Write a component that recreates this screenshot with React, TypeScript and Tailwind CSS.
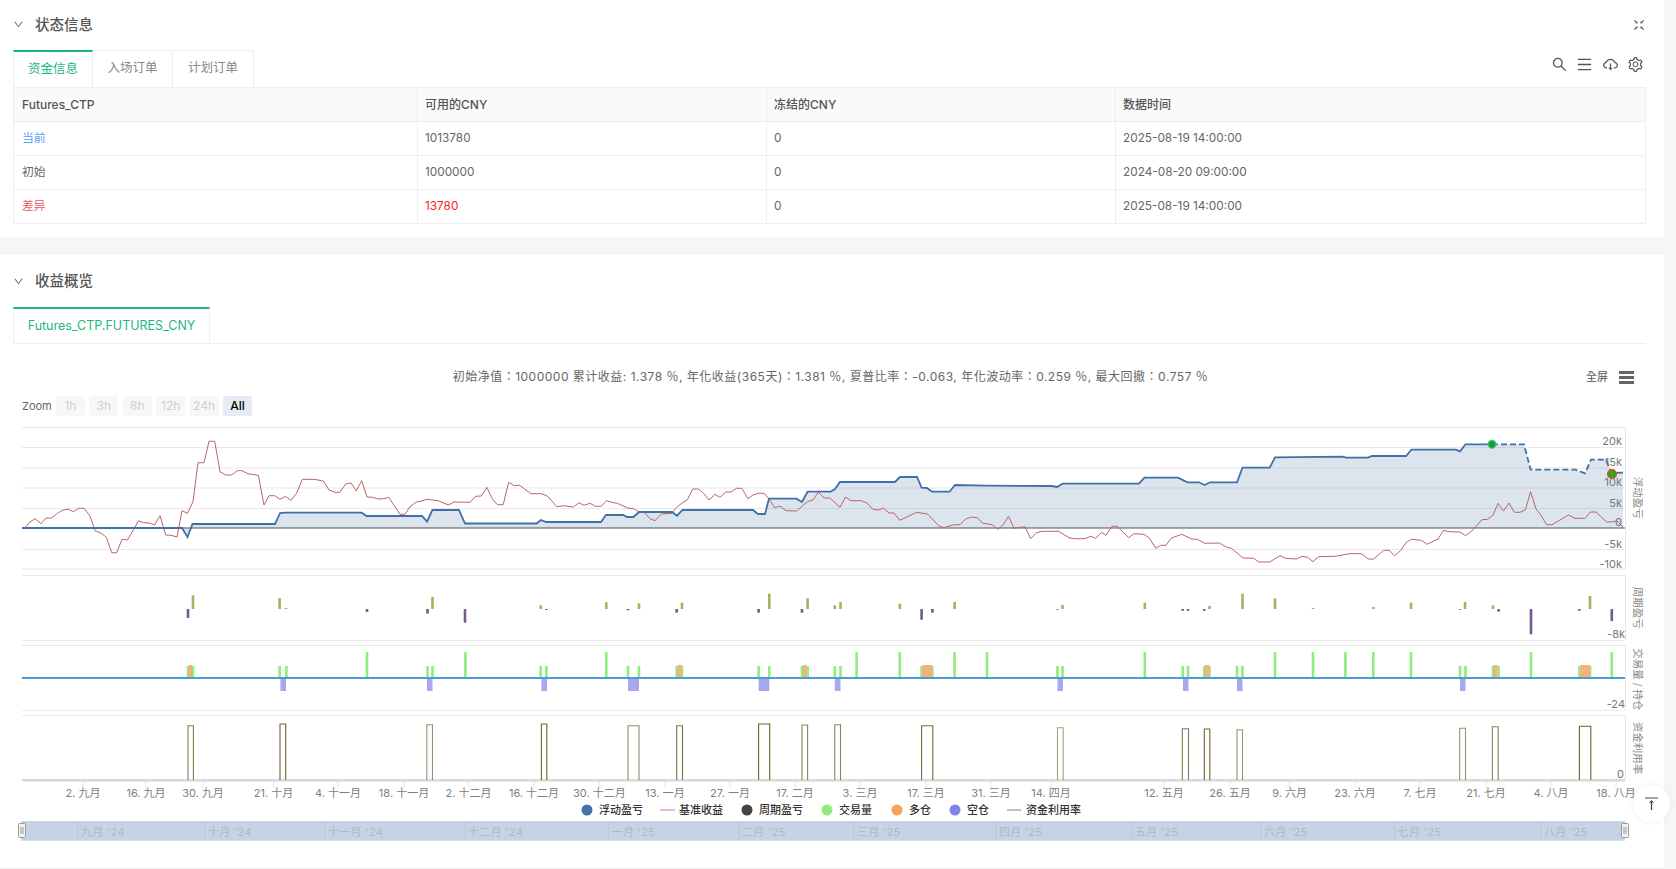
import React from "react";
import {
  AiOutlineCloudDownload,
  AiOutlineDown,
  AiOutlineFullscreenExit,
  AiOutlineMenu,
  AiOutlineSearch,
  AiOutlineSetting,
} from "react-icons/ai";

const FONT = "Inter, 'Noto Sans CJK SC', sans-serif";

const blueSolid =
  "22,528 182,528 187.5,537 192.5,524 275,524 280,513 285,512.7 361.6,512.7 366.6,516 422,516 427,521.7 432.4,510 459,510 465,523.5 536.5,523.5 541,520 546,522 601,522 606,515 623,515 627,517 633.5,517 639,512 672,512 677,515.7 682.5,510 753,510 758,514 765,514 769,498.7 796.5,498.7 802,502 807.6,491.7 830.6,491.7 835,489 840,482 895,482 900,477 917,477 921.6,487.7 927,488 932,491.7 949.6,491.7 955,485 985,485.7 1052,486 1057,487 1062.5,483.7 1139,483.7 1144.5,477.7 1178,477.7 1187.4,482.3 1199,482.3 1204.7,485 1210,482.3 1237,482.3 1242.5,467.7 1269.7,467.7 1275,457.3 1342.5,456.7 1346,457.7 1368,457.7 1372,456 1406,456 1411.5,449.7 1456,449.7 1460,451.3 1465.5,444.3 1492,444.3";
const blueDashed = "1492,444.3 1524,444.3 1530.6,469.7 1575.7,469.7 1585,473.3 1591,459.7 1606,459.7 1611.4,473";
const blueEnd = "1611.4,473 1623,472.7";

const red =
  "25,527.7 30,522 35,518.7 41,523.7 46,518 51.7,518 57.4,513.3 63,510 68,509.3 73.5,511.7 78.5,508.3 84,508.3 90,516 95,530.7 101.4,533.3 106.4,537.3 111.7,552.7 116.7,552.7 122,539.3 127.4,540 132.8,531 138.5,520.7 143.5,522.7 149.3,523 154.6,525 160,515.7 165.7,535 171,535.3 177,537 182,510.7 187.5,513.3 193,501.7 198,462.7 204,462.7 209,441.3 214.7,441.3 220,471.7 225.8,475 231.5,475 237.3,470.7 241.9,470.7 248,473.7 258.3,475.3 264,505 269,495.7 274.8,495.7 280,499.3 285.5,496.3 291,500.3 296.6,493.3 302.3,479.3 314,479.3 323.4,481 329,490 335,492.3 339.8,492.3 345.6,484 351,483 356.3,490.7 361.7,480.7 367,497 372.4,497.3 378,499 384,498.7 388.8,497.3 400,514.3 405,514.3 410,506.7 416.4,502 422,501 426.7,499.3 438,500.7 448.5,505 454,502 470,502.3 475.7,496.3 481.4,496 486.8,487.3 492.5,499.3 497.5,504.7 503.2,504.7 508.6,482.3 514.3,485.7 519.7,485.3 530.8,493.7 541.5,493.7 547.3,496 556.8,506.7 563.7,505.7 573.4,507 579,502.7 584,505.3 590,503.3 595.2,506.3 601,506.3 606.7,500.7 611.7,502.3 617.4,503.3 627.7,508 633.5,508.7 638.8,511.7 644,512 650,518.7 655,520.7 661,514 671.7,513.3 676.7,507.3 682.5,502.7 687.4,499.7 692.8,489 698.5,489 703.5,493.3 709,500 715,494.3 720,497.3 725.7,492 731,492 736.4,488.3 741.8,488.3 748,498.7 753,495 758.6,493.3 764,493.3 769.3,499.3 774.7,507.7 780,506 786,510.7 796.5,511 807.6,501.7 813,500 818.3,492.3 824,498 829.8,498 840,507.3 845.5,497 851,500.7 861.6,500.7 867.3,503.3 873,509.3 878.8,510 883.4,508 889,513 894,513 899.8,520.3 916.7,512.3 927.4,514 939,526 943.9,527.7 954,524.7 960,524.7 965.7,519 971.4,517 977,517.7 983,523.3 992.4,524.7 998,529.3 1003,525 1008.5,516.3 1014,528.3 1025,526.7 1030.7,538.7 1036.5,532.7 1042,531.3 1058.7,531.3 1069,537.7 1074.7,538.7 1085,538.7 1090.8,536.3 1095.8,538.3 1101.5,532.3 1106,535.3 1112,526.3 1117.3,526.3 1128.7,537.7 1133.8,533.7 1144,534.3 1149.6,538.3 1155.8,548.3 1160.6,545.3 1166,545.3 1171,538.3 1181.6,534.3 1191.8,539 1197.4,539.3 1204.7,543.3 1219.4,543 1226.7,547.3 1231.5,548.3 1243,558 1253.6,558.3 1259,562 1269.7,562 1280,555.7 1285.5,558.3 1296.5,559 1302,556.3 1307.6,557.3 1313,561.7 1318.6,556.7 1335,556.3 1349.8,553.7 1361.6,553.7 1368,559 1373.7,559 1383.6,550.3 1389,550.3 1394.6,555.7 1400.5,550.7 1406,542.7 1411.5,539.3 1421.4,540.3 1427,544.3 1438,539 1443.5,530.3 1449,531.7 1460,532 1465.5,535.7 1471.8,531 1482,519.7 1487.6,519.3 1493,515.3 1498,503.3 1503.4,511 1509,503 1514.4,512.3 1520,512.3 1525.4,509.7 1530.6,491.7 1536,509 1540.8,515 1546.7,524.7 1552,524.7 1568.4,515 1575,518.3 1585,518.3 1590.4,512 1596,512 1607,522.3 1617,521 1623.5,527.3";

// [x, y] where y is the far end of the bar from the zero line at 609
const profitBars: [number, number][] = [
  [188, 618], [193, 595.3], [279.6, 598], [286, 608], [367, 612], [427.5, 613.5], [432.5, 597], [465, 622.7],
  [540.7, 605.3], [546.4, 610], [606.3, 602.3], [628, 610.3], [639, 603.3], [676.7, 612.7], [682, 602.7],
  [758.6, 612.7], [769.3, 593.7], [802, 612.7], [807.6, 598.3], [834.8, 605.3], [840.5, 602], [899.8, 603.7],
  [921.6, 619.7], [932.4, 612.7], [954.6, 602], [1057.5, 609.7], [1062.5, 605], [1144.8, 602.7], [1182.7, 610.7],
  [1188, 610.7], [1204.3, 610.7], [1209.5, 606], [1242.5, 593.7], [1275, 598.3], [1313, 608], [1373.3, 607],
  [1411, 602.7], [1460, 609.7], [1465, 602], [1493, 605.3], [1498.6, 611.7], [1531, 634.3], [1579.4, 610.7],
  [1590, 596], [1611.8, 621],
];

const fullVolume = [367, 465.4, 606.3, 856.6, 899.8, 954.6, 987, 1144.8, 1275, 1313, 1345.4, 1373.3, 1411, 1531, 1611.8];
const halfVolume = [
  188, 193, 279.6, 286.4, 427.5, 432.5, 540.7, 546.4, 628, 639, 676.7, 682, 758.6, 769.3, 802, 807.6, 834.8, 840.5,
  921.6, 932.4, 1057.5, 1062.5, 1182.7, 1188, 1204.3, 1209.5, 1237, 1242.5, 1460, 1465.5, 1493, 1498.6, 1579.4, 1590,
];
const longBlocks: [number, number][] = [
  [188, 193], [676.7, 682.5], [802, 807.6], [921.6, 933], [1204, 1210], [1492.4, 1498.2], [1579.4, 1591],
];
const shortBlocks: [number, number][] = [
  [280.4, 286], [427, 432.5], [541.4, 547], [628, 639], [758.6, 769.3], [834.8, 840.5], [1057.5, 1063], [1183, 1188.5],
  [1237, 1242.5], [1460, 1465.5],
];

// [left, right, top, opacity]
const usage: [number, number, number, number][] = [
  [188, 193.4, 725.7, 0.85], [280, 285.7, 724, 1], [426.8, 432.5, 724.7, 0.7], [541.4, 546.8, 724, 1],
  [628, 639, 725.7, 0.75], [676.7, 682.5, 725.7, 0.9], [758.6, 769.7, 724, 1], [802, 807.6, 725, 0.8],
  [834.8, 840.5, 724.7, 0.8], [921.6, 932.8, 725.7, 0.95], [1057.5, 1063.2, 727.7, 0.6], [1182.3, 1188.5, 728.7, 0.85],
  [1204.3, 1209.8, 729, 1], [1237, 1242.5, 729.7, 0.7], [1459.7, 1465.5, 728.3, 0.7], [1492.4, 1498.2, 726.7, 0.8],
  [1579.4, 1590.8, 726.3, 1],
];

const xLabels: [number, string][] = [
  [83, "2. 九月"], [146, "16. 九月"], [203, "30. 九月"], [273.6, "21. 十月"], [338, "4. 十一月"], [404, "18. 十一月"],
  [468.6, "2. 十二月"], [534, "16. 十二月"], [599.4, "30. 十二月"], [665, "13. 一月"], [730, "27. 一月"], [795, "17. 二月"],
  [860, "3. 三月"], [926, "17. 三月"], [991, "31. 三月"], [1051, "14. 四月"], [1164, "12. 五月"], [1230, "26. 五月"],
  [1289.6, "9. 六月"], [1355, "23. 六月"], [1420, "7. 七月"], [1486, "21. 七月"], [1551, "4. 八月"], [1616, "18. 八月"],
];

const navMonths: [number, string][] = [
  [78, "九月 '24"], [205, "十月 '24"], [325, "十一月 '24"], [465, "十二月 '24"], [608.6, "一月 '25"], [739, "二月 '25"],
  [854, "三月 '25"], [996, "四月 '25"], [1132, "五月 '25"], [1261, "六月 '25"], [1394.6, "七月 '25"], [1541, "八月 '25"],
];

const yLabels: [number, string][] = [
  [445, "20k"], [466, "15k"], [486, "10k"], [507, "5k"], [526, "0"], [548, "-5k"], [568, "-10k"],
];

const grid = [427.5, 447.5, 468, 488, 508.5, 549.5, 569];
const paneTops = [575.5, 645.5, 715.5];

function ChartSvg() {
  return (
    <svg width="1676" height="440" viewBox="0 420 1676 440" className="block" style={{ fontFamily: FONT }}>
      {grid.map((y) => (
        <line key={y} x1="22" x2="1625" y1={y} y2={y} stroke="#e9e9e9" strokeWidth="1.2" />
      ))}
      {paneTops.map((y) => (
        <line key={y} x1="22" x2="1625" y1={y} y2={y} stroke="#ebebeb" strokeWidth="1.2" />
      ))}
      <line x1="22" x2="1625" y1="640.5" y2="640.5" stroke="#ebebeb" strokeWidth="1.2" />
      <line x1="22" x2="1625" y1="710.5" y2="710.5" stroke="#ebebeb" strokeWidth="1.2" />
      {[[427, 569], [575, 640], [645, 710], [715, 780]].map(([a, b]) => (
        <line key={a} x1="1625.5" x2="1625.5" y1={a} y2={b} stroke="#dfe5f2" />
      ))}

      <polygon points={`${blueSolid} ${blueDashed} ${blueEnd} 1623,528 22,528`} fill="#4572a7" fillOpacity="0.19" />
      <line x1="22" x2="1625" y1="528" y2="528" stroke="#555" strokeWidth="1.2" />
      <polyline points={red} fill="none" stroke="#bd6464" strokeWidth="1" />
      <polyline points={blueSolid} fill="none" stroke="#4070a8" strokeWidth="1.8" />
      <polyline points={blueDashed} fill="none" stroke="#4070a8" strokeWidth="1.8" strokeDasharray="6 3" />
      <polyline points={blueEnd} fill="none" stroke="#4070a8" strokeWidth="1.8" />
      <circle cx="1492" cy="444.3" r="4.2" fill="#0bb51c" stroke="#7db7e8" strokeWidth="1" />
      <line x1="1492" x2="1492" y1="441.5" y2="447" stroke="#1e8a2a" />
      <circle cx="1612" cy="474" r="4.4" fill="#18a818" stroke="#e8502a" strokeWidth="1.4" />
      <line x1="1612" x2="1612" y1="471" y2="477" stroke="#7a9a20" />

      {yLabels.map(([y, t]) => (
        <text key={t} x="1622" y={y} fontSize="11" textAnchor="end" fill="#777">{t}</text>
      ))}
      <text x="1625" y="638" fontSize="11" textAnchor="end" fill="#777">-8k</text>
      <text x="1625" y="708" fontSize="11" textAnchor="end" fill="#777">-24</text>
      <text x="1624" y="778" fontSize="11" textAnchor="end" fill="#777">0</text>

      {profitBars.map(([x, y]) => {
        const up = y < 609;
        return (
          <rect
            key={x}
            x={x - 1.3}
            width="2.6"
            y={up ? y : 609}
            height={Math.abs(609 - y)}
            fill={up ? "#9bb75f" : "#75598f"}
          />
        );
      })}

      {fullVolume.map((x) => (
        <rect key={x} x={x - 1.3} y="652" width="2.6" height="26" fill="#90ed7d" />
      ))}
      {halfVolume.map((x) => (
        <rect key={x} x={x - 1.3} y="666" width="2.6" height="12" fill="#90ed7d" />
      ))}
      {longBlocks.map(([a, b]) => (
        <rect key={a} x={a + 0.8} y="665" width={b - a - 1.6} height="13" fill="#f7b07c" />
      ))}
      {shortBlocks.map(([a, b]) => (
        <rect key={a} x={a} y="678" width={b - a} height="13" fill="#a6a9ec" />
      ))}
      <line x1="22" x2="1625" y1="678" y2="678" stroke="#4d9ad8" strokeWidth="2" />

      <line x1="22" x2="1625" y1="780" y2="780" stroke="#d3cfbc" strokeWidth="1.6" />
      {usage.map(([a, b, t, o]) => (
        <polyline
          key={a}
          points={`${a},780 ${a},${t} ${b},${t} ${b},780`}
          fill="none"
          stroke="#6f6330"
          strokeOpacity={o}
          strokeWidth="1.1"
        />
      ))}
      <line x1="22" x2="1625" y1="781" y2="781" stroke="#ccd6eb" />

      {xLabels.map(([x, t]) => (
        <g key={t}>
          <line x1={x} x2={x} y1="781" y2="788" stroke="#dfe5f2" />
          <text x={x} y="797" fontSize="11" textAnchor="middle" fill="#808080">{t}</text>
        </g>
      ))}

      <g fontSize="10.5" fill="#888">
        <text transform="translate(1634,476.7) rotate(90)">浮动盈亏</text>
        <text transform="translate(1634,586.7) rotate(90)">周期盈亏</text>
        <text transform="translate(1634,648.3) rotate(90)">交易量 / 持仓</text>
        <text transform="translate(1634,721.7) rotate(90)">资金利用率</text>
      </g>

      <g fontSize="11" fontWeight="500" fill="#333">
        <circle cx="587" cy="810" r="5.5" fill="#4572a7" />
        <text x="599" y="814">浮动盈亏</text>
        <line x1="660" x2="675" y1="810" y2="810" stroke="#e07b7b" />
        <text x="679" y="814">基准收益</text>
        <circle cx="747" cy="810" r="5.5" fill="#434348" />
        <text x="759" y="814">周期盈亏</text>
        <circle cx="827" cy="810" r="5.5" fill="#90ed7d" />
        <text x="839" y="814">交易量</text>
        <circle cx="897" cy="810" r="5.5" fill="#f7a35c" />
        <text x="909" y="814">多仓</text>
        <circle cx="955" cy="810" r="5.5" fill="#8085e9" />
        <text x="967" y="814">空仓</text>
        <line x1="1007" x2="1021" y1="810" y2="810" stroke="#8d8560" />
        <text x="1026" y="814">资金利用率</text>
      </g>

      <rect x="21" y="821.5" width="1604" height="19" fill="#c6d3e4" />
      <line x1="21" x2="1625" y1="822" y2="822" stroke="#b9c7da" />
      <line x1="21" x2="1625" y1="840.5" y2="840.5" stroke="#d9dee6" />
      {navMonths.map(([x, t]) => (
        <g key={t}>
          <line x1={x} x2={x} y1="822" y2="840" stroke="#b9c7da" />
          <text x={x + 3} y="836" fontSize="11" fill="#adb9c9" letterSpacing="0.3">{t}</text>
        </g>
      ))}
      {[18.5, 1621.5].map((x) => (
        <g key={x}>
          <rect x={x} y="823.5" width="7" height="14" rx="1" fill="#f2f2f2" stroke="#999" />
          <line x1={x + 2.5} x2={x + 2.5} y1="827" y2="834" stroke="#999" />
          <line x1={x + 4.5} x2={x + 4.5} y1="827" y2="834" stroke="#999" />
        </g>
      ))}
    </svg>
  );
}

function SectionHead({ title, right, className }: { title: string; right?: React.ReactNode; className: string }) {
  return (
    <div className={`flex h-[50px] items-center pl-[13px] pr-[18px] ${className}`}>
      <AiOutlineDown className="mr-[11px] text-[11px] text-[#666]" />
      <span className="text-[14.5px] font-medium text-[#555]">{title}</span>
      <div className="ml-auto">{right}</div>
    </div>
  );
}

const rows = [
  { name: "当前", nameClass: "text-[#5a9ef0]", cash: "1013780", cashClass: "text-[#666]", frozen: "0", time: "2025-08-19 14:00:00", h: "h-[34px]" },
  { name: "初始", nameClass: "text-[#666]", cash: "1000000", cashClass: "text-[#666]", frozen: "0", time: "2024-08-20 09:00:00", h: "h-[34px]" },
  { name: "差异", nameClass: "text-[#e85a5a]", cash: "13780", cashClass: "text-[#ff1a1a]", frozen: "0", time: "2025-08-19 14:00:00", h: "h-[33px]" },
];

export default function App() {
  return (
    <div className="h-[869px] w-[1676px] overflow-hidden bg-[#f5f6f8] text-[12px]" style={{ fontFamily: FONT }}>
      <section className="h-[237px] w-[1664px] bg-white">
        <SectionHead className="pb-[1px]" title="状态信息" right={<AiOutlineFullscreenExit className="text-[14px] text-[#555]" />} />
        <div className="flex h-[37px] items-end pl-[13px] pr-[20px]">
          <div className="flex h-full w-[80px] items-center justify-center border-t-2 border-r border-l border-[#eee] border-t-[#1fb57f] pb-[1px] text-[12.5px] text-[#1fb57f]">资金信息</div>
          <div className="flex h-full w-[80px] items-center justify-center border-t border-r border-[#eee] pb-[1px] text-[12.5px] text-[#888]">入场订单</div>
          <div className="flex h-full w-[81px] items-center justify-center border-t border-r border-[#eee] pb-[1px] text-[12.5px] text-[#888]">计划订单</div>
          <div className="ml-auto flex items-center gap-[8.5px] pb-[14px] text-[17px] text-[#555]">
            <AiOutlineSearch />
            <AiOutlineMenu />
            <AiOutlineCloudDownload />
            <AiOutlineSetting />
          </div>
        </div>
        <div className="ml-[13px] w-[1633px] border border-[#eee] text-[#666]">
          <div className="grid h-[34px] grid-cols-[403px_349px_349px_1fr] items-center border-b border-[#eee] bg-[#fafafa] font-medium text-[#555]">
            <div className="flex h-full items-center pl-2">Futures_CTP</div>
            <div className="flex h-full items-center border-l border-[#eee] pl-[7px]">可用的CNY</div>
            <div className="flex h-full items-center border-l border-[#eee] pl-[7px]">冻结的CNY</div>
            <div className="flex h-full items-center border-l border-[#eee] pl-[7px]">数据时间</div>
          </div>
          {rows.map((r, i) => (
            <div key={r.name} className={`grid ${r.h} grid-cols-[403px_349px_349px_1fr] items-center text-[11.8px] ${i < 2 ? "border-b border-[#eee]" : ""}`}>
              <div className={`flex h-full items-center pl-2 ${r.nameClass}`}>{r.name}</div>
              <div className={`flex h-full items-center border-l border-[#eee] pl-[7px] ${r.cashClass}`}>{r.cash}</div>
              <div className="flex h-full items-center border-l border-[#eee] pl-[7px]">{r.frozen}</div>
              <div className="flex h-full items-center border-l border-[#eee] pl-[7px]">{r.time}</div>
            </div>
          ))}
        </div>
      </section>

      <section className="relative mt-[18px] h-[613px] w-[1664px] bg-white">
        <SectionHead className="pt-[2px]" title="收益概览" />
        <div className="ml-[13px] mr-[18px] mt-[2px] flex h-[37px] border-b border-[#eee]">
          <div className="flex h-full w-[197px] items-center justify-center border-t-2 border-r border-l border-[#eee] border-t-[#1fb57f] text-[12.5px] text-[#1fb57f]">Futures_CTP.FUTURES_CNY</div>
        </div>
        <div className="relative flex h-[42px] items-end justify-center pr-[3px] text-[12px] tracking-[0.5px] text-[#666]" style={{ fontFamily: "Inter, 'Noto Sans CJK TC', sans-serif" }}>
          <span>初始净值：1000000 累计收益: 1.378 ％, 年化收益(365天)：1.381 ％, 夏普比率：-0.063, 年化波动率：0.259 ％, 最大回撤：0.757 ％</span>
          <div className="absolute right-[30px] top-[25px] flex items-center gap-[11px]">
            <span className="text-[11px] tracking-normal text-[#555]">全屏</span>
            <span className="flex w-[15px] flex-col gap-[2px]">
              <i className="h-[3px] bg-[#666]" />
              <i className="h-[3px] bg-[#666]" />
              <i className="h-[3px] bg-[#666]" />
            </span>
          </div>
        </div>
        <div className="mt-[10px] flex h-[20px] items-center gap-[4.4px] pl-[22px] text-[12px]">
          <span className="w-[29.6px] text-[11px] text-[#666]">Zoom</span>
          {["1h", "3h", "8h", "12h", "24h"].map((b) => (
            <span key={b} className="flex h-[20px] w-[29px] items-center justify-center rounded-[2px] bg-[#f7f7f7] text-[#cfcfcf]">{b}</span>
          ))}
          <span className="flex h-[20px] w-[29px] items-center justify-center rounded-[2px] bg-[#e6ebf5] font-medium text-black">All</span>
        </div>
        <div className="mt-[4px]">
          <ChartSvg />
        </div>
        <button className="absolute left-[1633px] top-[530px] flex h-[37px] w-[37px] items-center justify-center rounded-full bg-white shadow-[0_0_6px_rgba(0,0,0,0.07)]">
          <svg width="15" height="14" viewBox="0 0 15 14" fill="none" stroke="#444">
            <line x1="1" x2="14" y1="1" y2="1" strokeWidth="1" />
            <line x1="7.5" x2="7.5" y1="4" y2="13" strokeWidth="1.3" />
            <path d="M5.5 6 L7.5 3.5 L9.5 6" strokeWidth="1" />
          </svg>
        </button>
      </section>
      <div className="h-px w-[1664px] bg-[#f0f0f0]" />
    </div>
  );
}
